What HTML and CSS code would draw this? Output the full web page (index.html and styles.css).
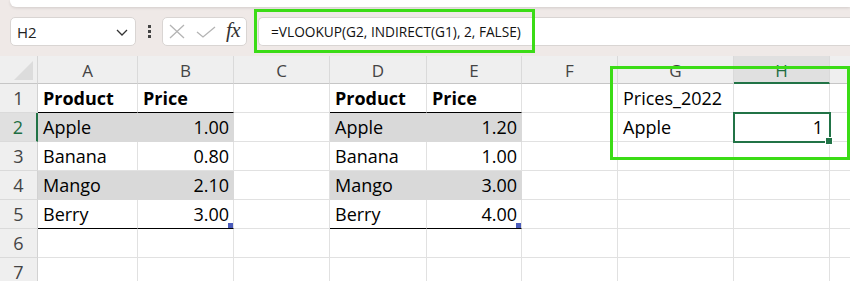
FILE: index.html
```html
<!DOCTYPE html>
<html>
<head>
<meta charset="utf-8">
<link rel="stylesheet" href="styles.css">
</head>
<body>
<div class="app">
  <div class="topcard"></div>
  <div class="toolbar">
    <div class="namebox">
      <span class="name">H2</span>
      <svg class="chev" width="12" height="7" viewBox="0 0 12 7"><path d="M1 1 L6 6 L11 1" fill="none" stroke="#333" stroke-width="1.3"/></svg>
    </div>
    <div class="dots"><i></i><i></i><i></i></div>
    <div class="fxbox">
      <svg class="ico" width="16" height="15" viewBox="0 0 16 15"><path d="M1 1 L15 14 M15 1 L1 14" stroke="#b4b4b4" stroke-width="1.3" fill="none"/></svg>
      <svg class="ico" width="20" height="12" viewBox="0 0 20 12"><path d="M1 6 L7 11 L19 1" stroke="#b4b4b4" stroke-width="1.3" fill="none"/></svg>
      <span class="fx">fx</span>
    </div>
    <div class="formula">=VLOOKUP(G2, INDIRECT(G1), 2, FALSE)</div>
  </div>
  <div class="sheet">
    <div class="grid">
      <div class="c corner"><span class="tri"></span></div>
      <div class="c ch">A</div><div class="c ch">B</div><div class="c ch">C</div><div class="c ch">D</div><div class="c ch">E</div><div class="c ch">F</div><div class="c ch">G</div><div class="c ch sel">H</div><div class="c ch last"></div>

      <div class="c rh">1</div>
      <div class="c b hb">Product</div><div class="c b hb">Price</div><div class="c"></div><div class="c b hb">Product</div><div class="c b hb">Price</div><div class="c"></div><div class="c">Prices_2022</div><div class="c"></div><div class="c last"></div>

      <div class="c rh selr">2</div>
      <div class="c f">Apple</div><div class="c f r">1.00</div><div class="c"></div><div class="c f">Apple</div><div class="c f r">1.20</div><div class="c"></div><div class="c">Apple</div><div class="c r active">1<span class="handle"></span></div><div class="c last"></div>

      <div class="c rh">3</div>
      <div class="c">Banana</div><div class="c r">0.80</div><div class="c"></div><div class="c">Banana</div><div class="c r">1.00</div><div class="c"></div><div class="c"></div><div class="c"></div><div class="c last"></div>

      <div class="c rh">4</div>
      <div class="c f">Mango</div><div class="c f r">2.10</div><div class="c"></div><div class="c f">Mango</div><div class="c f r">3.00</div><div class="c"></div><div class="c"></div><div class="c"></div><div class="c last"></div>

      <div class="c rh">5</div>
      <div class="c hb">Berry</div><div class="c r hb">3.00<span class="tbl"></span></div><div class="c"></div><div class="c hb">Berry</div><div class="c r hb">4.00<span class="tbl"></span></div><div class="c"></div><div class="c"></div><div class="c"></div><div class="c last"></div>

      <div class="c rh">6</div>
      <div class="c"></div><div class="c"></div><div class="c"></div><div class="c"></div><div class="c"></div><div class="c"></div><div class="c"></div><div class="c"></div><div class="c last"></div>

      <div class="c rh">7</div>
      <div class="c"></div><div class="c"></div><div class="c"></div><div class="c"></div><div class="c"></div><div class="c"></div><div class="c"></div><div class="c"></div><div class="c last"></div>
    </div>
    <div class="mark mark-formula"></div>
    <div class="mark mark-cells"></div>
  </div>
</div>
</body>
</html>
```
FILE: styles.css
```css
* { box-sizing: border-box; }
html, body { margin: 0; padding: 0; background: #fff; }
body { width: 850px; height: 281px; overflow: hidden; font-family: "Open Sans", "Noto Sans", sans-serif; }
.app { position: relative; width: 850px; height: 281px; overflow: hidden; background: #efe9e7; }

.topcard { height: 7px; margin-left: 10px; background: #fff; border-radius: 0 0 0 6px; box-shadow: 0 1px 3px rgba(0,0,0,0.12); position: relative; z-index: 1; }

.toolbar { height: 49px; display: flex; align-items: flex-start; padding: 10px 0 0 10px; gap: 0; }
.namebox { width: 126px; height: 29px; background: #fff; border: 1px solid #d9d5d3; border-radius: 5px; display: flex; align-items: center; justify-content: space-between; padding: 0 7px 0 6px; }
.name { font-size: 15px; color: #222; }
.chev { margin-top: 2px; }
.dots { width: 26px; height: 29px; display: flex; flex-direction: column; align-items: center; justify-content: center; gap: 2px; }
.dots i { display: block; width: 3px; height: 3px; background: #444; }
.fxbox { width: 85px; height: 29px; background: #fff; border: 1px solid #d9d5d3; border-radius: 5px; display: flex; align-items: center; padding: 0 0 0 6px; gap: 11px; }
.fxbox .ico { flex: none; }
.fx { font-family: "Liberation Serif", "DejaVu Serif", serif; font-style: italic; font-size: 21px; color: #333; margin-left: -1px; letter-spacing: -0.5px; line-height: 1; margin-top: -3px; }
.formula { margin-left: 11px; flex: 1; height: 29px; background: #fff; border: 1px solid #d9d5d3; border-right: none; border-radius: 5px 0 0 5px; font-size: 13.7px; color: #111; display: flex; align-items: center; padding-left: 12px; }

.sheet { position: absolute; left: 0; top: 56px; width: 850px; height: 225px; background: #fff; }
.grid { display: grid; grid-template-columns: 38px 100px 96px 96px 97px 95px 96px 116px 96px 1fr; grid-auto-rows: 29px; grid-template-rows: 28px; }
.c { border-right: 1px solid #e1e1e1; border-bottom: 1px solid #e1e1e1; font-size: 18px; color: #000; display: flex; align-items: flex-end; padding: 0 4px 1px 5px; line-height: 26px; white-space: nowrap; position: relative; }
.c.last { border-right: none; }
.c.r { justify-content: flex-end; }
.c.b { font-weight: 700; }
.c.f { background: #d9d9d9; border-right-color: #d9d9d9; border-bottom-color: #d9d9d9; }
.c.hb { border-bottom-color: #000; }

.corner { background: #efefef; border-right-color: #d6d6d6; border-bottom-color: #c6c6c6; }
.tri { position: absolute; right: 4px; bottom: 3px; width: 0; height: 0; border-left: 19px solid transparent; border-bottom: 19px solid #dcdcdc; }
.ch { background: #efefef; border-right-color: #dadada; border-bottom-color: #c6c6c6; justify-content: center; align-items: center; font-size: 17px; color: #444; padding: 3px 0 0 0; }
.ch.sel { background: #e0e0e0; color: #1e6e42; border-bottom: 2px solid #217346; padding-top: 4px; }
.rh { background: #efefef; border-right-color: #d2d2d2; border-bottom-color: #dadada; justify-content: center; font-size: 18px; color: #444; padding: 0 0 1px 0; }
.rh.selr { background: #e0e0e0; color: #1e6e42; border-right: 2px solid #217346; }

.active { outline: 2px solid #217346; outline-offset: -1px; z-index: 2; padding-right: 6px; }
.handle { position: absolute; right: -4px; bottom: -4px; width: 6px; height: 6px; background: #217346; border: 1px solid #fff; box-sizing: content-box; }
.tbl { position: absolute; right: 0; bottom: 0; width: 5px; height: 5px; background: #4a5bba; }

.mark { position: absolute; border: 3px solid #3bdc16; pointer-events: none; z-index: 5; }
.mark-formula { left: 254px; top: -47px; width: 281px; height: 44px; }
.mark-cells { left: 610px; top: 10px; width: 240px; height: 94px; }
```
